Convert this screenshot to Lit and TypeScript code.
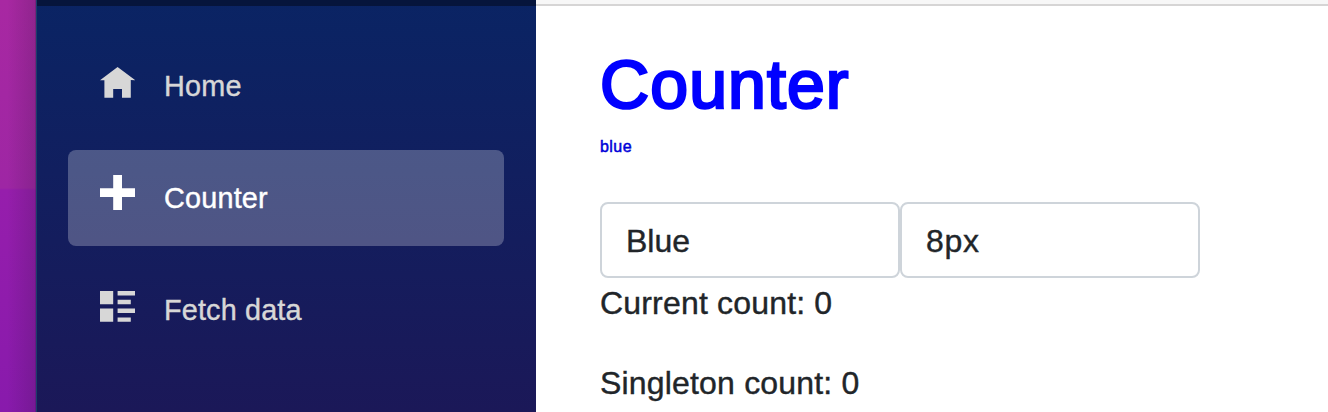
import { LitElement, html, css, svg } from "lit";
import { customElement, property } from "lit/decorators.js";

const icons = {
  home: { units: 7, d: "M4 0l-4 3h1v4h2v-2h2v2h2v-4.03l1 .03-4-3z" },
  plus: { units: 8, d: "M3 0v3h-3v2h3v3h2v-3h3v-2h-3v-3h-2z" },
  list: {
    units: 7,
    d: "M0 0v3h3v-3h-3zm4 0v1h4v-1h-4zm0 2v1h3v-1h-3zm-4 2v3h3v-3h-3zm4 0v1h4v-1h-4zm0 2v1h3v-1h-3z",
  },
};

@customElement("nav-item")
class NavItem extends LitElement {
  @property() icon: keyof typeof icons = "home";

  static styles = css`
    :host {
      display: flex;
      box-sizing: border-box;
      height: 96px;
      padding-left: 32px;
      border-radius: 8px;
      color: #d7d7d7;
      font-size: 28.8px;
      line-height: 96px;
    }
    :host([active]) {
      background: rgba(255, 255, 255, 0.25);
      color: #fff;
    }
    .icon {
      display: flex;
      flex-direction: column;
      justify-content: flex-end;
      width: 64px;
      height: 60px;
    }
    svg {
      display: block;
      width: 35.2px;
      fill: currentColor;
    }
    .label {
      white-space: nowrap;
      letter-spacing: var(--track, 0.2px);
      -webkit-text-stroke: 0.4px currentColor;
    }
  `;

  render() {
    const { units, d } = icons[this.icon];
    return html`
      <span class="icon">
        <svg viewBox="0 0 8 ${units}">${svg`<path d=${d}></path>`}</svg>
      </span>
      <span class="label"><slot></slot></span>
    `;
  }
}

@customElement("app-root")
class AppRoot extends LitElement {
  static styles = css`
    :host {
      display: flex;
      width: 1328px;
      height: 412px;
      overflow: hidden;
      background: #fff;
      color: #212529;
      font-family: "Liberation Sans", Arial, sans-serif;
      font-size: 32px;
    }
    .desktop {
      flex: none;
      width: 36px;
      background:
        linear-gradient(90deg, rgba(0, 0, 0, 0) 20%, rgba(40, 20, 50, 0.18) 97%, rgba(30, 20, 50, 0.5) 100%),
        linear-gradient(#a828a2 0, #9e26a4 188px, #961eac 190px, #881aac 412px);
    }
    .sidebar {
      flex: none;
      box-sizing: border-box;
      width: 500px;
      border-left: 1px solid #1c3f6c;
      background: linear-gradient(#0a2464, #1b1858);
    }
    .brand {
      height: 6px;
      background: rgba(0, 0, 0, 0.4);
    }
    .nav {
      display: flex;
      flex-direction: column;
      gap: 16px;
      padding: 32px 32px 0 31px;
    }
    .fetch {
      --track: 0.16px;
    }
    .main {
      flex: 1;
    }
    .toprow {
      box-sizing: border-box;
      height: 6px;
      border-bottom: 2px solid #d6d5d5;
      background: #f7f7f7;
    }
    .content {
      padding-left: 64px;
    }
    h1 {
      margin: 0;
      padding-top: 37px;
      font-size: 68px;
      font-weight: 400;
      line-height: 82px;
      color: #00f;
      letter-spacing: 1.1px;
      -webkit-text-stroke: 2.6px #00f;
    }
    .caption {
      margin: 0;
      padding-top: 12px;
      height: 66px;
      box-sizing: border-box;
      font-size: 16px;
      line-height: 20px;
      color: #0000d8;
      letter-spacing: 0.45px;
      -webkit-text-stroke: 0.5px #0000d8;
    }
    .fields {
      display: flex;
      padding-top: 11px;
    }
    .field {
      box-sizing: border-box;
      width: 300px;
      height: 76px;
      padding: 0 24px;
      border: 2px solid #ced4da;
      border-radius: 8px;
      line-height: 74px;
    }
    .size {
      letter-spacing: 0.7px;
    }
    .text {
      margin: 0;
      height: 48px;
      line-height: 50px;
      letter-spacing: 0.18px;
    }
    .field,
    .text {
      -webkit-text-stroke: 0.4px currentColor;
    }
    .spaced {
      margin-bottom: 32px;
    }
  `;

  render() {
    return html`
      <div class="desktop"></div>
      <div class="sidebar">
        <div class="brand"></div>
        <nav class="nav">
          <nav-item icon="home">Home</nav-item>
          <nav-item icon="plus" active>Counter</nav-item>
          <nav-item class="fetch" icon="list">Fetch data</nav-item>
        </nav>
      </div>
      <div class="main">
        <div class="toprow"></div>
        <div class="content">
          <h1>Counter</h1>
          <p class="caption">blue</p>
          <div class="fields">
            <div class="field">Blue</div>
            <div class="field size">8px</div>
          </div>
          <p class="text spaced">Current count: 0</p>
          <p class="text">Singleton count: 0</p>
        </div>
      </div>
    `;
  }
}
